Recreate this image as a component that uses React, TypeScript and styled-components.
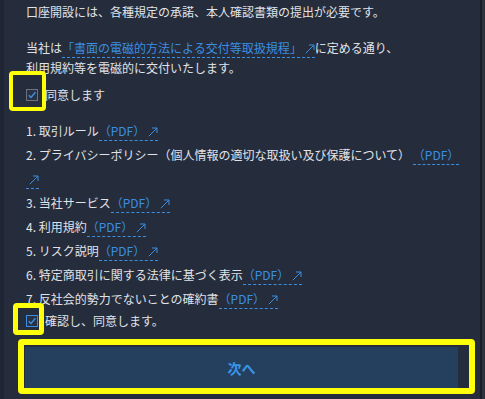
import React from "react";
import styled, { createGlobalStyle } from "styled-components";

const Global = createGlobalStyle`
  html, body { margin: 0; padding: 0; background: #252c3b; }
  body { font-family: "Noto Sans CJK JP", "Noto Sans", sans-serif; }
  * { box-sizing: border-box; }
`;

const Frame = styled.div`
  position: relative;
  display: flex;
  width: 485px;
  height: 399px;
  overflow: hidden;
  background: #252c3b;
`;

const LeftEdge = styled.div`
  width: 4px;
  flex: none;
  background: #1f2534;
`;

const Panel = styled.div`
  flex: 1;
  padding: 2px 18px 0 22px;
  color: #e0e3e9;
  font-size: 12px;
`;

const ScrollEdge = styled.div`
  width: 5px;
  flex: none;
  background: #2d323d;
  border-left: 2px solid #1a1e28;
`;

const Para = styled.p<{ $gap?: number }>`
  margin: 0 0 ${(p) => p.$gap ?? 0}px;
  line-height: 20px;
`;

const Link = styled.a`
  color: #3b8fe2;
  text-decoration: none;
  border-bottom: 1px dashed #3b8fe2;
  padding-bottom: 1px;
`;

const Arrow = styled.svg`
  width: 10px;
  height: 10px;
  margin-left: 3px;
  vertical-align: -1px;
`;

const CheckRow = styled.label`
  display: flex;
  align-items: center;
  gap: 7px;
  height: 20px;
  line-height: 20px;
`;

const Box = styled.span<{ $blue?: boolean }>`
  width: 12px;
  height: 12px;
  flex: none;
  border: 1px solid ${(p) => (p.$blue ? "#3b8fe2" : "#6a7180")};
  background: #2a3142;
  display: flex;
  align-items: center;
  justify-content: center;
`;

const List = styled.ol`
  list-style: none;
  margin: 0;
  padding: 0;
  line-height: 24px;
`;

const Item = styled.li``;

const Button = styled.button`
  display: block;
  margin: 16px 0 0 -1px;
  width: 433px;
  height: 42px;
  border: none;
  background: #25405f;
  color: #3b95e6;
  font-family: "Noto Sans CJK JP", sans-serif;
  font-weight: 700;
  font-size: 14px;
  padding: 0;
`;

const Mark = styled.div<{ $x: number; $y: number; $w: number; $h: number; $t: number }>`
  position: absolute;
  left: ${(p) => p.$x}px;
  top: ${(p) => p.$y}px;
  width: ${(p) => p.$w}px;
  height: ${(p) => p.$h}px;
  border: ${(p) => p.$t}px solid #ffff0a;
  border-radius: 4px;
  pointer-events: none;
`;

const ExtArrow = () => (
  <Arrow viewBox="0 0 10 10" fill="none" stroke="#3b8fe2" strokeWidth="1">
    <path d="M0.8 9.2 L9 1" />
    <path d="M4 1 H9 V6" />
  </Arrow>
);

const Check = () => (
  <svg width="10" height="10" viewBox="0 0 10 10" fill="none" stroke="#3b8fe2" strokeWidth="1.5">
    <path d="M1.8 5.2 L4 7.5 L8.4 2.3" />
  </svg>
);

const Pdf = () => (
  <Link href="#">
    （PDF）
    <ExtArrow />
  </Link>
);

const items = [
  "取引ルール",
  "プライバシーポリシー（個人情報の適切な取扱い及び保護について） ",
  "当社サービス",
  "利用規約",
  "リスク説明",
  "特定商取引に関する法律に基づく表示",
  "反社会的勢力でないことの確約書",
];

export default function App() {
  return (
    <>
      <Global />
      <Frame>
        <LeftEdge />
        <Panel>
          <Para $gap={16}>口座開設には、各種規定の承諾、本人確認書類の提出が必要です。</Para>
          <Para>
            当社は
            <Link href="#">
              「書面の電磁的方法による交付等取扱規程」
              <ExtArrow />
            </Link>
            に定める通り、
            <br />
            利用規約等を電磁的に交付いたします。
          </Para>
          <CheckRow style={{ marginTop: 7 }}>
            <Box>
              <Check />
            </Box>
            同意します
          </CheckRow>
          <List style={{ marginTop: 14 }}>
            {items.map((t, i) => (
              <Item key={i}>
                {i + 1}. {t}
                <Pdf />
              </Item>
            ))}
          </List>
          <CheckRow>
            <Box $blue>
              <Check />
            </Box>
            確認し、同意します。
          </CheckRow>
          <Button>次へ</Button>
        </Panel>
        <ScrollEdge />
        <Mark $x={9} $y={71} $w={37} $h={40} $t={4} />
        <Mark $x={13} $y={303} $w={31} $h={32} $t={5} />
        <Mark $x={18} $y={339} $w={457} $h={55} $t={6} />
      </Frame>
    </>
  );
}
